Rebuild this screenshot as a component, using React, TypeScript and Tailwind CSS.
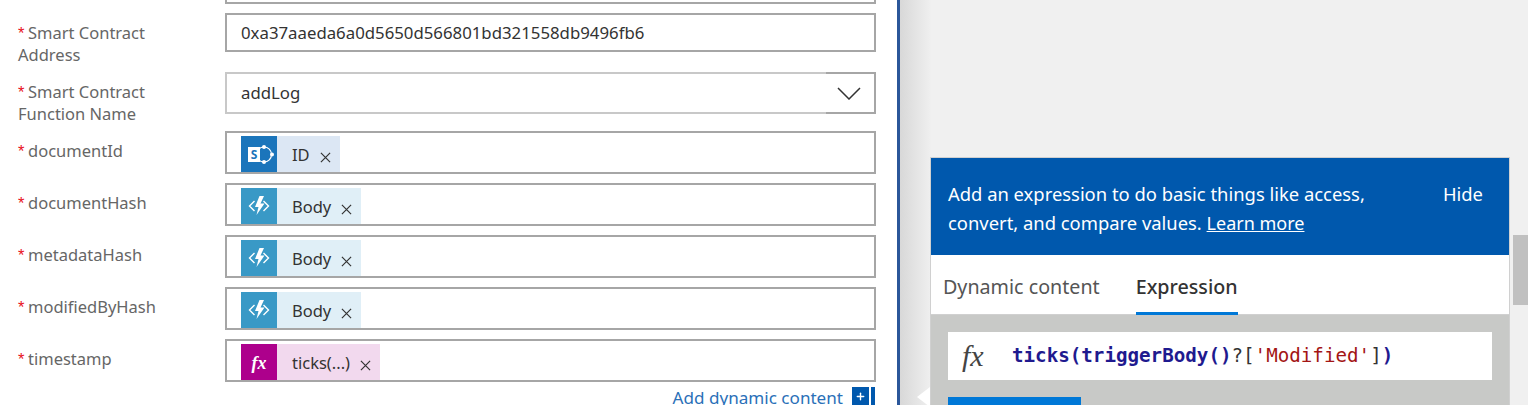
import { Plus } from "lucide-react"

const sans = "font-['Noto_Sans','Open_Sans',sans-serif]"

function SharePointIcon() {
  return (
    <svg viewBox="0 0 36 36" className="w-[36px] h-[36px]">
      <circle cx="23" cy="18.5" r="7.5" fill="none" stroke="#fff" strokeWidth="1.2" />
      <circle cx="23" cy="11" r="2" fill="#fff" />
      <circle cx="31" cy="18.5" r="2" fill="#fff" />
      <circle cx="23" cy="26" r="2" fill="#fff" />
      <rect x="7" y="11" width="12" height="15" fill="#fff" />
      <text x="13" y="23" textAnchor="middle" fontSize="12" fontWeight="700" fill="#1b75bb" fontFamily="Open Sans, sans-serif">
        S
      </text>
    </svg>
  )
}

function FunctionIcon() {
  return (
    <svg viewBox="0 0 36 36" className="w-[36px] h-[36px]">
      <path d="M13.5 13 L8.5 18 L13.5 23" fill="none" stroke="#fff" strokeWidth="1.4" />
      <path d="M22.5 13 L27.5 18 L22.5 23" fill="none" stroke="#fff" strokeWidth="1.4" />
      <path d="M18.5 8 L14 19 L17.5 19 L15.5 27 L23.5 15.5 L19.5 15.5 L23 8 Z" fill="#fff" />
    </svg>
  )
}

function Label({ children }: { children: React.ReactNode }) {
  return (
    <div className="w-[207px] shrink-0 text-[16.5px] leading-[22px] text-[#666]">
      <span className="inline-block w-[10px] text-[#e81123] font-['Liberation_Sans',sans-serif]">*</span>
      {children}
    </div>
  )
}

function TokenField({
  label,
  text,
  tone,
  icon,
}: {
  label: string
  text: string
  tone: string
  icon: React.ReactNode
}) {
  return (
    <div className="flex h-[43px]">
      <div className="pt-[9px]">
        <Label>{label}</Label>
      </div>
      <div className="flex-1 border-2 border-[#a6a6a6] pl-[14px] pt-[3px] overflow-hidden">
        <div className={`inline-flex h-[38px] items-start text-[16.5px] text-[#333] ${tone}`}>
          {icon}
          <span className="ml-[15px] mt-[8px] leading-[22px]">{text}</span>
          <svg viewBox="0 0 12 12" className="w-[11px] h-[11px] mt-[16px] ml-[10px] mr-[9px]">
            <path d="M1 1 L11 11 M11 1 L1 11" stroke="#333" strokeWidth="1.3" />
          </svg>
        </div>
      </div>
    </div>
  )
}

export default function App() {
  return (
    <div className={`flex w-[1528px] h-[405px] overflow-hidden bg-[#f0f0f0] ${sans}`}>
      {/* Formulario */}
      <div className="w-[900px] shrink-0 h-full bg-white border-r-[3px] border-[#2b579a] pl-[18px] pr-[21px]">
        <div className="ml-[207px] h-[4px] border-2 border-t-0 border-[#a6a6a6]" />
        <div className="flex mt-[9px] h-[59px]">
          <div className="pt-[9px]">
            <Label>
              Smart Contract
              <br />
              Address
            </Label>
          </div>
          <div className="flex-1 h-[39px] border-2 border-[#a6a6a6] pl-[14px] text-[16.8px] leading-[36px] text-[#333]">
            0xa37aaeda6a0d5650d566801bd321558db9496fb6
          </div>
        </div>
        <div className="flex h-[59px]">
          <div className="pt-[9px]">
            <Label>
              Smart Contract
              <br />
              Function Name
            </Label>
          </div>
          <div className="flex-1 h-[42px] flex border-2 border-[#c8c8c8] border-r-0">
            <div className="flex-1 pl-[14px] text-[16.8px] leading-[38px] text-[#333]">addLog</div>
            <div className="w-[50px] -my-[2px] border-2 border-l-0 border-t-[#a6a6a6] border-r-[#a6a6a6] border-b-[#a6a6a6] flex items-center justify-center">
              <svg viewBox="0 0 24 13" className="w-[24px] h-[13px] mr-[3px]">
                <path d="M1 1 L12 12 L23 1" fill="none" stroke="#333" strokeWidth="1.5" />
              </svg>
            </div>
          </div>
        </div>
        <div className="flex flex-col gap-[9px]">
          <TokenField label="documentId" text="ID" tone="bg-[#dce7f4]" icon={<span className="bg-[#1b75bb] flex h-[38px]"><SharePointIcon /></span>} />
          <TokenField label="documentHash" text="Body" tone="bg-[#e0eff7]" icon={<span className="bg-[#3999c6] flex h-[38px]"><FunctionIcon /></span>} />
          <TokenField label="metadataHash" text="Body" tone="bg-[#e0eff7]" icon={<span className="bg-[#3999c6] flex h-[38px]"><FunctionIcon /></span>} />
          <TokenField label="modifiedByHash" text="Body" tone="bg-[#e0eff7]" icon={<span className="bg-[#3999c6] flex h-[38px]"><FunctionIcon /></span>} />
          <TokenField
            label="timestamp"
            text="ticks(...)"
            tone="bg-[#f2d9ee]"
            icon={
              <span className="bg-[#ad008c] w-[36px] h-[38px] flex items-center justify-center text-white text-[18px] italic font-bold font-['Liberation_Serif',serif]">
                fx
              </span>
            }
          />
        </div>
        <div className="flex justify-end items-start mt-[5px] pr-[1px] text-[17.1px] leading-[22px] text-[#2a70b8]">
          Add dynamic content
          <span className="ml-[9px] w-[17px] h-[18px] bg-[#0058ad] flex items-center justify-center text-white">
            <Plus size={11} strokeWidth={3} />
          </span>
          <span className="ml-[2px] w-[4px] h-[18px] bg-[#0058ad]" />
        </div>
      </div>

      {/* Panel de expresiones */}
      <div className="relative flex-1 pl-[30px] pt-[157px] bg-gradient-to-r from-[#d8d8d8] via-[#f0f0f0] via-[5%] to-[#f0f0f0]">
        <div className="w-[580px] h-[260px] border border-[#d0d0d0] bg-[#c8c9c7]">
          <div className="h-[97px] bg-[#0058ad] flex pl-[17px] pr-[26px] pt-[21px] text-[18.4px] leading-[29px] text-white">
            <div className="flex-1">
              Add an expression to do basic things like access,
              <br />
              convert, and compare values. <span className="underline text-[18px]">Learn more</span>
            </div>
            <div>Hide</div>
          </div>
          <div className="h-[60px] bg-white flex pl-[12px] gap-[36px] text-[19.7px] leading-[64px] border-b border-[#d0d0d0]">
            <div className="text-[#555]">Dynamic content</div>
            <div className="h-[60px] border-b-[3px] border-[#0078d7] text-[#333] font-medium">Expression</div>
          </div>
          <div className="mx-[17px] mt-[17px] h-[48px] bg-white flex items-center">
            <span className="ml-[14px] w-[50px] text-[30px] leading-[30px] italic text-[#444] font-['Liberation_Serif',serif]">fx</span>
            <span className="text-[19.2px] font-bold font-['DejaVu_Sans_Mono',monospace] text-[#1f1a8f]">
              ticks(triggerBody()<span className="font-normal text-[#333]">?[</span>
              <span className="font-normal text-[#a31515]">'Modified'</span>
              <span className="font-normal text-[#333]">]</span>)
            </span>
          </div>
          <div className="ml-[17px] mt-[17px] w-[133px] h-[20px] bg-[#0078d7]" />
        </div>
        <div className="absolute left-[17px] top-[387px] w-0 h-0 border-y-[10px] border-y-transparent border-r-[13px] border-r-white" />
        <div className="absolute right-0 top-[235px] w-[15px] h-[70px] bg-[#c0c0c0]" />
      </div>
    </div>
  )
}
